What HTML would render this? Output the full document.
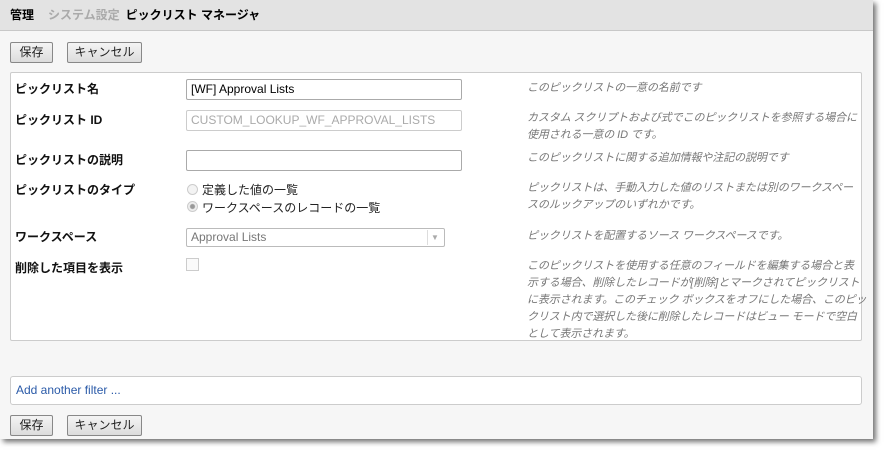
<!DOCTYPE html>
<html><head><meta charset="utf-8"><style>
*{box-sizing:border-box;margin:0;padding:0}
body{width:888px;height:453px;background:#fff;font-family:"Liberation Sans","Noto Sans CJK JP",sans-serif;font-size:12px;position:relative;overflow:hidden}
.page{position:absolute;left:0;top:0;width:873px;height:439px;background:#f6f6f6;box-shadow:3px 3px 5px rgba(0,0,0,.55)}
.hdr{position:absolute;left:0;top:0;width:873px;height:31px;background:#e3e3e3;border-bottom:1px solid #c8c8c8;font-weight:bold;font-size:12px;line-height:31px;padding-left:10px}
.hdr .g{color:#aaa;margin:0 6px 0 14px}
.btn{position:absolute;height:21px;border:1px solid #888;background:linear-gradient(#f4f4f4,#dcdcdc);border-radius:2px;font-size:12px;line-height:19px;text-align:center;color:#222}
.panel{position:absolute;left:10px;top:72px;width:852px;height:269px;background:#fff;border:1px solid #ccc;border-radius:2px}
.l{position:absolute;left:15px;font-weight:bold;color:#111}
.inp{position:absolute;left:186px;width:276px;height:21px;border:1px solid #aaa;border-radius:2px;background:#fff;padding-left:4px;line-height:19px}
.d{position:absolute;left:527px;font-style:italic;color:#777;line-height:17px;font-size:11px;white-space:nowrap;letter-spacing:-0.1px}
.rad{position:absolute;left:187px;width:11px;height:11px;border-radius:50%;border:1px solid #ccc;background:#f3f3f3}
.filter{position:absolute;left:10px;top:376px;width:852px;height:29px;background:#fff;border:1px solid #ccc;border-radius:3px;color:#2a5aa8;padding-left:5px;line-height:27px}
</style></head><body>
<div class="page">
<div class="hdr">管理<span class="g">システム設定</span>ピックリスト マネージャ</div>
<div class="btn" style="left:10px;top:42px;width:43px">保存</div>
<div class="btn" style="left:67px;top:42px;width:75px">キャンセル</div>
<div class="panel"></div>
<div class="l" style="top:80px">ピックリスト名</div>
<div class="inp" style="top:79px">[WF] Approval Lists</div>
<div class="d" style="top:80px">このピックリストの一意の名前です</div>
<div class="l" style="top:111px">ピックリスト ID</div>
<div class="inp" style="top:110px;border-color:#ccc;color:#aaa">CUSTOM_LOOKUP_WF_APPROVAL_LISTS</div>
<div class="d" style="top:110px">カスタム スクリプトおよび式でこのピックリストを参照する場合に<br>使用される一意の ID です。</div>
<div class="l" style="top:151px">ピックリストの説明</div>
<div class="inp" style="top:150px"></div>
<div class="d" style="top:150px">このピックリストに関する追加情報や注記の説明です</div>
<div class="l" style="top:181px">ピックリストのタイプ</div>
<div class="rad" style="top:184px"></div><div style="position:absolute;left:202px;top:181px;color:#222">定義した値の一覧</div>
<div class="rad" style="top:201px;background:radial-gradient(#999 0 2px,#eee 3px)"></div><div style="position:absolute;left:202px;top:199px;color:#222">ワークスペースのレコードの一覧</div>
<div class="d" style="top:180px">ピックリストは、手動入力した値のリストまたは別のワークスペー<br>スのルックアップのいずれかです。</div>
<div class="l" style="top:228px">ワークスペース</div>
<div class="inp" style="top:228px;width:259px;height:19px;line-height:17px;color:#777;border-color:#bbb">Approval Lists<span style="position:absolute;right:2px;top:1px;width:15px;height:15px;border-left:1px solid #ddd;font-size:8px;color:#aaa;text-align:center;line-height:15px">▼</span></div>
<div class="d" style="top:228px">ピックリストを配置するソース ワークスペースです。</div>
<div class="l" style="top:259px">削除した項目を表示</div>
<div style="position:absolute;left:186px;top:258px;width:13px;height:13px;border:1px solid #ccc;background:#fafafa"></div>
<div class="d" style="top:258px">このピックリストを使用する任意のフィールドを編集する場合と表<br>示する場合、削除したレコードが[削除]とマークされてピックリスト<br>に表示されます。このチェック ボックスをオフにした場合、このピッ<br>クリスト内で選択した後に削除したレコードはビュー モードで空白<br>として表示されます。</div>
<div class="filter">Add another filter ...</div>
<div class="btn" style="left:10px;top:415px;width:43px">保存</div>
<div class="btn" style="left:67px;top:415px;width:75px">キャンセル</div>
</div>
</body></html>
